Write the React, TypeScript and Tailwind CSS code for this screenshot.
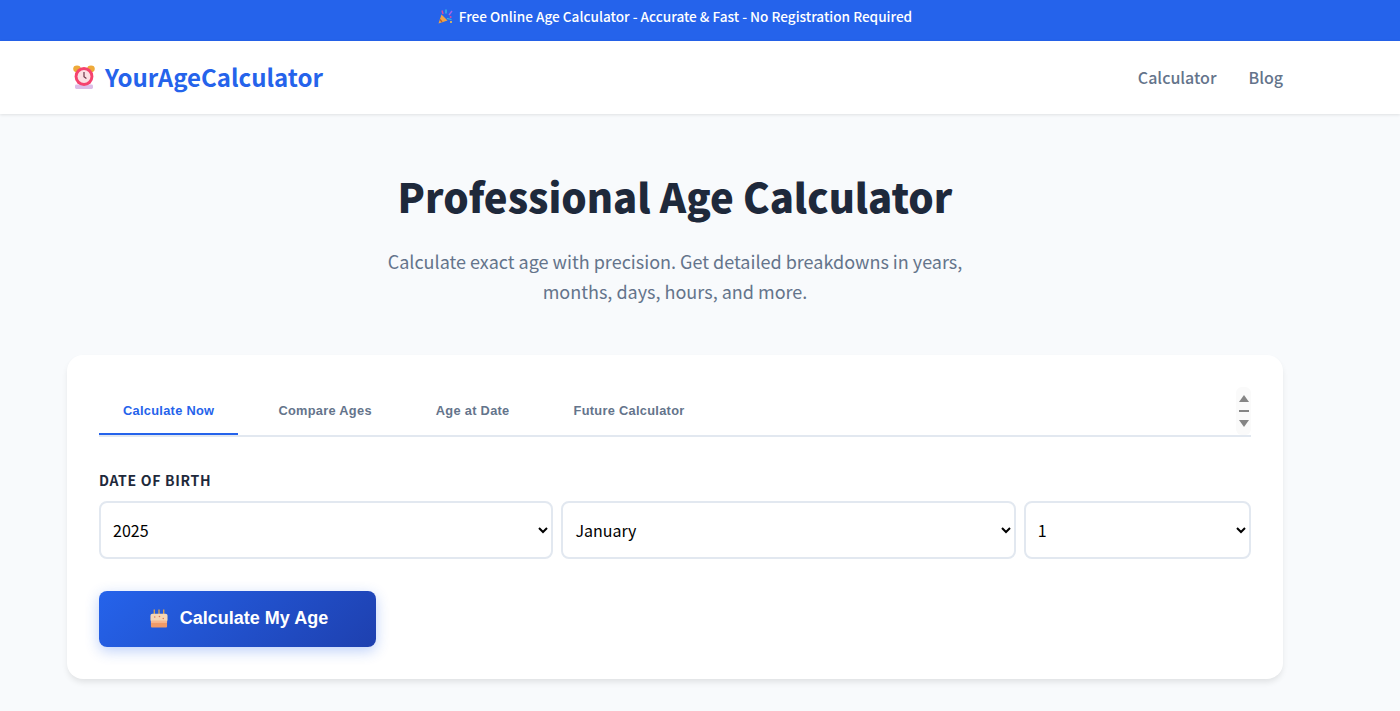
import React from 'react'

const TABS = ['Calculate Now', 'Compare Ages', 'Age at Date', 'Future Calculator']
const MONTHS = ['January', 'February', 'March', 'April', 'May', 'June', 'July', 'August', 'September', 'October', 'November', 'December']

function ClockIcon() {
  return (
    <svg width="22" height="24" viewBox="0 0 22 24" className="ml-[6px] shrink-0">
      <ellipse cx="4" cy="3.8" rx="3.8" ry="3.4" fill="#eeaa3a" />
      <ellipse cx="18" cy="3.8" rx="3.8" ry="3.4" fill="#eeaa3a" />
      <rect x="2" y="19.5" width="18" height="4.5" rx="1.4" fill="#dcbde8" />
      <circle cx="11" cy="11.5" r="9.4" fill="#f5426e" />
      <circle cx="11" cy="11.5" r="6.5" fill="#fbdfe3" />
      <path d="M11 7v4.8l2.4 1.8" stroke="#6d3448" strokeWidth="1.2" fill="none" />
    </svg>
  )
}

function PartyIcon() {
  return (
    <svg width="15" height="15" viewBox="0 0 15 15" className="shrink-0">
      <path d="M0.5 14.5l3-9 6 6z" fill="#f0a347" />
      <path d="M2 10.5l2 2.5" stroke="#b8622e" strokeWidth="1.3" />
      <path d="M4 1.5l1 3.5" stroke="#e24a9c" strokeWidth="1.4" />
      <path d="M8 0.5v4" stroke="#38bde6" strokeWidth="1.4" />
      <path d="M11 6l3-4" stroke="#a565e6" strokeWidth="1.4" />
      <circle cx="12.6" cy="8" r="1" fill="#e24a9c" />
      <path d="M9 9.5l4.5 1" stroke="#38bde6" strokeWidth="1.2" />
      <circle cx="13" cy="13" r="1" fill="#f7c948" />
    </svg>
  )
}

function CakeIcon() {
  return (
    <svg width="18" height="19" viewBox="0 0 19 19" className="shrink-0">
      <path d="M4.5 0v6M9.5 0v6M14.5 0v6" stroke="#e9a844" strokeWidth="1.3" />
      <rect x="0.5" y="4.5" width="18" height="8.5" rx="2" fill="#f6d6b4" />
      <rect x="1" y="12" width="17" height="7" rx="1" fill="#f09a68" />
      <rect x="1" y="12.5" width="17" height="1.3" fill="#fbc9a4" />
      <circle cx="5" cy="8" r=".8" fill="#d8785a" />
      <circle cx="10" cy="7.5" r=".8" fill="#d8785a" />
      <circle cx="14" cy="9.5" r=".8" fill="#d8785a" />
    </svg>
  )
}

function DateSelect({ options }: { options: string[] }) {
  return (
    <select className="h-[58px] w-full min-w-0 rounded-lg border-2 border-[#e2e8f0] bg-white pl-2 pr-3 text-[16px] text-black appearance-auto">
      {options.map(o => <option key={o}>{o}</option>)}
    </select>
  )
}

export default function App() {
  return (
    <div className="h-[711px] overflow-hidden bg-[#f8fafc] font-['Noto_Sans_CJK_SC','Noto_Sans',sans-serif]">
      <div className="bg-[#2563eb] pr-[50px]">
        <div className="flex h-[41px] items-center justify-center gap-[6px] pb-[9px] text-[13.6px] font-medium text-white">
          <PartyIcon />
          <span>Free Online Age Calculator - Accurate &amp; Fast - No Registration Required</span>
        </div>
      </div>

      <header className="h-[73px] bg-white pr-[50px] shadow-[0_1px_3px_rgba(0,0,0,0.1)]">
        <div className="mx-auto flex h-full w-[1216px] items-center justify-between">
          <div className="flex items-center gap-[10px] pb-[1px]">
            <ClockIcon />
            <span className="text-[24px] font-bold text-[#2563eb]">YourAgeCalculator</span>
          </div>
          <nav className="flex gap-8 pb-[2px] text-[16px] font-medium text-[#64748b]">
            <a>Calculator</a>
            <a>Blog</a>
          </nav>
        </div>
      </header>

      <main className="pr-[50px]">
        <div className="mx-auto w-[1216px]">
          <h1 className="mt-[52px] text-center text-[40px] leading-[60px] font-extrabold text-[#1e293b]">Professional Age Calculator</h1>
          <p className="mx-auto mt-[20px] w-[600px] text-center text-[18px] leading-[30px] text-[#64748b]">
            Calculate exact age with precision. Get detailed breakdowns in years, months, days, hours, and more.
          </p>

          <section className="mt-[49px] h-[324px] rounded-2xl bg-white px-8 pt-8 shadow-[0_4px_6px_-1px_rgba(0,0,0,0.1)]">
            <div className="relative flex h-[50px] gap-4 border-b-2 border-[#e2e8f0]">
              {TABS.map((t, i) => (
                <button
                  key={t}
                  className={`h-[48px] border-b-2 px-6 pt-[1px] font-['Liberation_Sans',sans-serif] text-[12.8px] font-bold tracking-[0.3px] ${i === 0 ? 'border-[#2563eb] text-[#2563eb]' : 'border-transparent text-[#64748b]'}`}
                >
                  {t}
                </button>
              ))}
              <div className="absolute right-0 top-0 flex h-[48px] w-[15px] flex-col items-center justify-center gap-2 rounded-md bg-[#fafafa]">
                <svg width="10" height="7" viewBox="0 0 10 7"><path d="M5 0l5 7H0z" fill="#858585" /></svg>
                <div className="h-[2px] w-[10px] bg-[#858585]" />
                <svg width="10" height="7" viewBox="0 0 10 7"><path d="M0 0h10L5 7z" fill="#858585" /></svg>
              </div>
            </div>

            <label className="mt-[33px] block text-[14px] leading-[20px] font-semibold tracking-[0.7px] text-[#1e293b]">DATE OF BIRTH</label>
            <div className="mt-[11px] grid grid-cols-[2fr_2fr_1fr] gap-2">
              <DateSelect options={['2025', '2024', '2023']} />
              <DateSelect options={MONTHS} />
              <DateSelect options={['1', '2', '3']} />
            </div>

            <button className="mt-8 flex h-[56px] w-[277px] items-center justify-center gap-3 rounded-lg bg-[linear-gradient(135deg,#2563eb,#1e40af)] pb-[2px] pl-[3px] font-['Liberation_Sans',sans-serif] text-[18px] font-bold text-white shadow-[0_4px_14px_rgba(37,99,235,0.3)]">
              <CakeIcon />
              <span>Calculate My Age</span>
            </button>
          </section>
        </div>
      </main>
    </div>
  )
}
